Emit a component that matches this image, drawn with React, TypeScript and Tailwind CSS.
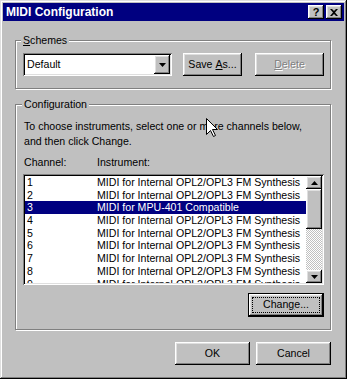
import React from "react";

const raised =
  "shadow-[inset_-1px_-1px_0_#000,inset_1px_1px_0_#fff,inset_-2px_-2px_0_#808080,inset_2px_2px_0_#dfdfdf]";
const sunken =
  "shadow-[inset_1px_1px_0_#808080,inset_-1px_-1px_0_#fff,inset_2px_2px_0_#000,inset_-2px_-2px_0_#dfdfdf]";
const etched = "border border-[#808080] shadow-[inset_1px_1px_0_#fff,1px_1px_0_#fff]";

const rows = [
  ["1", "MIDI for Internal OPL2/OPL3 FM Synthesis"],
  ["2", "MIDI for Internal OPL2/OPL3 FM Synthesis"],
  ["3", "MIDI for MPU-401 Compatible"],
  ["4", "MIDI for Internal OPL2/OPL3 FM Synthesis"],
  ["5", "MIDI for Internal OPL2/OPL3 FM Synthesis"],
  ["6", "MIDI for Internal OPL2/OPL3 FM Synthesis"],
  ["7", "MIDI for Internal OPL2/OPL3 FM Synthesis"],
  ["8", "MIDI for Internal OPL2/OPL3 FM Synthesis"],
  ["9", "MIDI for Internal OPL2/OPL3 FM Synthesis"],
];

function DownArrow() {
  return (
    <svg width="7" height="4" viewBox="0 0 7 4">
      <path d="M0 0H7L3.5 4Z" fill="#000" />
    </svg>
  );
}
function UpArrow() {
  return (
    <svg width="7" height="4" viewBox="0 0 7 4">
      <path d="M0 4H7L3.5 0Z" fill="#000" />
    </svg>
  );
}

export default function App() {
  return (
    <div className="font-['Liberation_Sans',Arial,sans-serif] text-[10.6px] text-black">
      <div
        className={`relative w-[347px] h-[379px] bg-[#c0c0c0] p-[3px] flex flex-col shadow-[inset_-1px_-1px_0_#000,inset_1px_1px_0_#dfdfdf,inset_-2px_-2px_0_#808080,inset_2px_2px_0_#fff]`}
      >
        {/* Title bar */}
        <div className="h-[18px] bg-[#000080] flex items-center pl-[3px] pr-[2px]">
          <span className="flex-1 text-white font-bold text-[12px] leading-[18px]">MIDI Configuration</span>
          <div className="flex gap-[2px]">
            <div className={`w-[16px] h-[14px] bg-[#c0c0c0] ${raised} flex items-center justify-center font-bold text-[11px] leading-none pt-[1px]`}>
              ?
            </div>
            <div className={`w-[16px] h-[14px] bg-[#c0c0c0] ${raised} flex items-center justify-center`}>
              <svg width="8" height="7" viewBox="0 0 8 7">
                <path d="M0 0H2L4 2L6 0H8L5 3.5L8 7H6L4 5L2 7H0L3 3.5Z" fill="#000" />
              </svg>
            </div>
          </div>
        </div>

        <div className="flex flex-col pl-[12px] pr-[13px]">
          {/* Schemes */}
          <div className={`relative mt-[19px] h-[49px] ${etched} pt-[12px] pl-[7px] pr-[6px] flex items-center`}>
            <span className="absolute left-[5px] top-[-8px] px-[2px] bg-[#c0c0c0] leading-[14px]">
              <span className="underline">S</span>chemes
            </span>
            <div className={`w-[149px] h-[23px] bg-white ${sunken} p-[2px] flex self-start`}>
              <span className="flex-1 pl-[2px] leading-[19px]">Default</span>
              <div className={`w-[16px] h-full bg-[#c0c0c0] ${raised} flex items-center justify-center`}>
                <DownArrow />
              </div>
            </div>
            <div className={`ml-[11px] w-[59px] h-[23px] ${raised} flex items-center justify-center self-start`}>
              Save <span className="underline ml-[3px]">A</span>s...
            </div>
            <div className={`ml-[13px] w-[69px] h-[23px] ${raised} flex items-center justify-center self-start text-[#808080] [text-shadow:1px_1px_0_#fff]`}>
              <span className="underline">D</span>elete
            </div>
          </div>

          {/* Configuration */}
          <div className={`relative mt-[15px] h-[226px] ${etched} pt-[14px] pl-[7px] pr-[6px] flex flex-col`}>
            <span className="absolute left-[6px] top-[-8px] px-[2px] bg-[#c0c0c0] leading-[14px]">Configuration</span>
            <p className="leading-[15px] pl-[1px]">
              To choose instruments, select one or more channels below,
              <br />
              and then click Change.
            </p>
            <div className="mt-[6px] flex leading-[14px]">
              <span className="w-[74px] pl-[1px]">Channel:</span>
              <span>Instrument:</span>
            </div>
            <div className={`mt-[5px] h-[111px] bg-white ${sunken} p-[2px] flex`}>
              <div className="flex-1 overflow-hidden">
                {rows.map(([ch, name], i) => (
                  <div
                    key={ch}
                    className={`h-[12.7px] leading-[12.7px] flex whitespace-nowrap ${i === 2 ? "bg-[#000080] text-white" : ""}`}
                  >
                    <span className="w-[72px] pl-[2px]">{ch}</span>
                    <span>{name}</span>
                  </div>
                ))}
              </div>
              <div className="w-[16px] flex flex-col">
                <div className={`h-[13px] bg-[#c0c0c0] ${raised} flex items-center justify-center`}>
                  <UpArrow />
                </div>
                <div className={`h-[40px] bg-[#c0c0c0] ${raised}`} />
                <div className="flex-1 bg-[repeating-conic-gradient(#c0c0c0_0%_25%,#fff_0%_50%)] bg-[length:2px_2px]" />
                <div className={`h-[13px] bg-[#c0c0c0] ${raised} flex items-center justify-center`}>
                  <DownArrow />
                </div>
              </div>
            </div>
            <div className="mt-[8px] self-end w-[76px] h-[24px] border border-black">
              <div className={`w-full h-full ${raised} p-[3px]`}>
                <div className="w-full h-full border border-dotted border-black flex items-center justify-center">
                  Chan<span className="underline">g</span>e...
                </div>
              </div>
            </div>
          </div>

          {/* OK / Cancel */}
          <div className="mt-[12px] flex justify-end gap-[6px]">
            <div className={`w-[75px] h-[23px] ${raised} flex items-center justify-center`}>OK</div>
            <div className={`w-[75px] h-[23px] ${raised} flex items-center justify-center`}>Cancel</div>
          </div>
        </div>

        {/* mouse cursor */}
        <svg className="absolute left-[206px] top-[118px]" width="12" height="20" viewBox="0 0 12 20">
          <path
            d="M0.5 0.5V16.5L4.5 12.5L7.5 18.5L9.5 17.5L6.5 11.5H11.5Z"
            fill="#fff"
            stroke="#000"
            strokeWidth="1"
          />
        </svg>
      </div>
    </div>
  );
}
